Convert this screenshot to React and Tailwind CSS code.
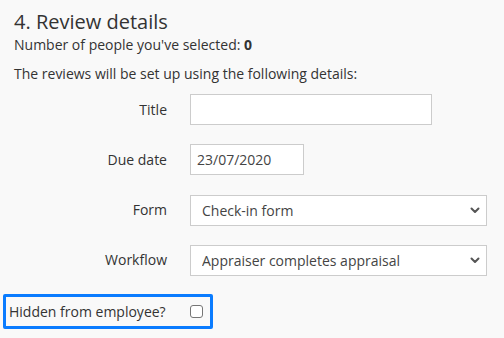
import React from 'react';

const Chevron = () => (
    <svg
        className="pointer-events-none absolute right-[6px] top-1/2 -translate-y-1/2"
        width="12"
        height="8"
        viewBox="0 0 12 8"
        fill="none"
    >
        <path d="M2.5 2.5l3.5 3.5 3.5-3.5" stroke="#555" strokeWidth="2" strokeLinecap="round" strokeLinejoin="round" />
    </svg>
);

const Row = ({ label, children }) => (
    <div className="flex items-center h-[31px]">
        <label className="w-[153px] text-right text-[14px] text-[#333] mr-[23px]">{label}</label>
        {children}
    </div>
);

const App = () => {
    return (
        <div className="min-h-screen bg-[#f9f9f9] px-[14px] pt-[9px] text-[#333]" style={{ fontFamily: '"Open Sans", sans-serif' }}>
            <h2 className="text-[20px] leading-[26px]">4. Review details</h2>
            <p className="text-[14px] leading-[22px] mt-[-1px]">
                Number of people you've selected: <strong className="font-bold">0</strong>
            </p>
            <p className="text-[14px] leading-[20px] mt-[8px]">
                The reviews will be set up using the following details:
            </p>

            <div className="mt-[10px] flex flex-col gap-[19px]">
                <Row label="Title">
                    <input
                        type="text"
                        className="w-[242px] h-[31px] bg-white border border-[#ccc] px-[7px] text-[14px] outline-none"
                    />
                </Row>
                <Row label="Due date">
                    <input
                        type="text"
                        defaultValue="23/07/2020"
                        className="w-[114px] h-[31px] bg-white border border-[#ccc] px-[6px] text-[14px] text-[#444] outline-none"
                    />
                </Row>
                <Row label="Form">
                    <div className="relative mt-[1px]">
                        <select className="w-[297px] h-[31px] appearance-none bg-white border border-[#ccc] pl-[11px] text-[14px] text-[#444] outline-none">
                            <option>Check-in form</option>
                        </select>
                        <Chevron />
                    </div>
                </Row>
                <Row label="Workflow">
                    <div className="relative mt-[1px]">
                        <select className="w-[297px] h-[31px] appearance-none bg-white border border-[#ccc] pl-[11px] text-[14px] text-[#444] outline-none">
                            <option>Appraiser completes appraisal</option>
                        </select>
                        <Chevron />
                    </div>
                </Row>
            </div>

            <div className="mt-[19px] ml-[-11px] w-[210px] h-[35px] border-[3px] border-[#0a7cff] rounded-[2px] flex items-center pl-[3px]">
                <span className="text-[14px] text-[#333]">Hidden from employee?</span>
                <span className="ml-auto mr-[7px] w-[13px] h-[13px] rounded-[3px] border border-[#767676] bg-white"></span>
            </div>
        </div>
    );
};

export default App;
